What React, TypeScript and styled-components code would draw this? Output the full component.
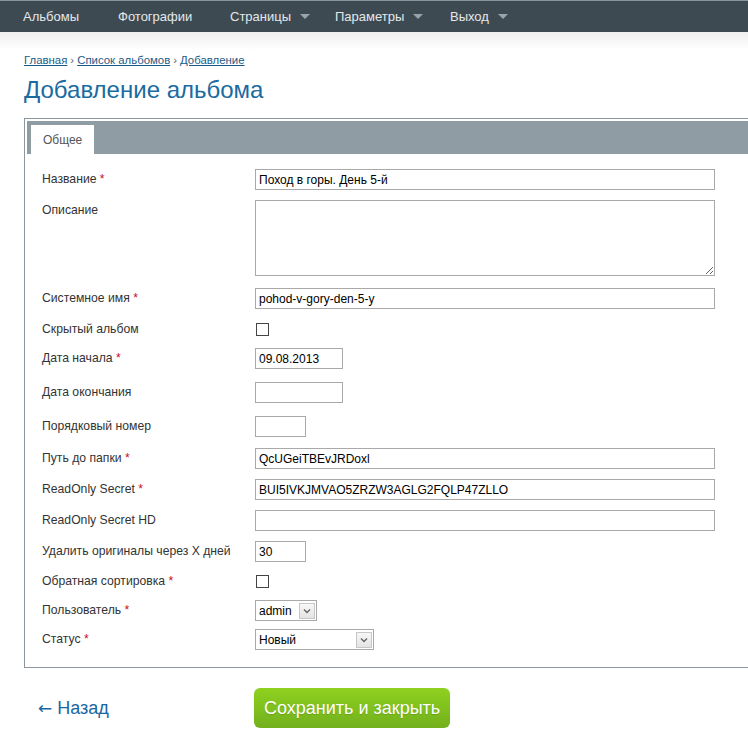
import React from "react";
import styled, { createGlobalStyle } from "styled-components";

const Global = createGlobalStyle`
  html, body { margin: 0; padding: 0; background: #fff; overflow: hidden; }
  body { font-family: "Liberation Sans", Arial, sans-serif; }
  * { box-sizing: border-box; }
`;

const Nav = styled.nav`
  height: 32px;
  background: #3d4a52;
  border-top: 1px solid #8a9399;
  display: flex;
  align-items: center;
  padding-left: 23px;
`;

const NavItem = styled.a<{ $w: number }>`
  width: ${(p) => p.$w}px;
  color: #e4e8ea;
  font-size: 13px;
  text-decoration: none;
  display: flex;
  align-items: center;
  gap: 9px;
`;

const Caret = styled.span`
  width: 0;
  height: 0;
  border-left: 5px solid transparent;
  border-right: 5px solid transparent;
  border-top: 5px solid #9aa3a8;
`;

const Shade = styled.div`
  background: linear-gradient(#efefef, #fff);
  height: 18px;
`;

const Content = styled.main`
  padding-left: 24px;
`;

const Crumbs = styled.div`
  font-size: 11.4px;
  color: #666;
  display: flex;
  gap: 3px;
  align-items: baseline;
  height: 17px;
  padding-top: 4px;
`;

const Crumb = styled.a`
  color: #1a5c88;
  text-decoration: underline;
`;

const Title = styled.h1`
  margin: 10px 0 0;
  font-weight: normal;
  font-size: 24px;
  color: #1a6ba0;
  height: 41px;
  line-height: 26px;
`;

const Panel = styled.section`
  width: 760px;
  border: 1px solid #8d989e;
  padding: 2px 2px 0;
`;

const TabBar = styled.div`
  height: 33px;
  background: #8f9ca3;
  display: flex;
  align-items: flex-end;
  padding-left: 4px;
`;

const Tab = styled.div`
  height: 29px;
  background: #fff;
  padding: 0 12px;
  display: flex;
  align-items: center;
  font-size: 12px;
  color: #555;
`;

const Form = styled.div`
  padding: 15px 0 17px 15px;
  display: flex;
  flex-direction: column;
`;

const Row = styled.div<{ $mt: number }>`
  display: grid;
  grid-template-columns: 213px 1fr;
  align-items: start;
  margin-top: ${(p) => p.$mt}px;
`;

const Label = styled.label`
  font-size: 12.2px;
  color: #333;
  line-height: 21px;
`;

const Req = styled.span`
  color: #c8102e;
`;

const Input = styled.input<{ $w: number }>`
  width: ${(p) => p.$w}px;
  height: 21px;
  border: 1px solid #a9a9a9;
  padding: 0 3px;
  font-family: "Liberation Sans", Arial, sans-serif;
  font-size: 12px;
  color: #000;
  outline: none;
  display: block;
`;

const TextArea = styled.textarea`
  width: 460px;
  height: 76px;
  border: 1px solid #a9a9a9;
  display: block;
  outline: none;
`;

const CheckCell = styled.div`
  height: 21px;
  display: flex;
  align-items: center;
  padding-left: 1px;
`;

const Check = styled.input`
  appearance: none;
  margin: 0;
  width: 13px;
  height: 13px;
  border: 1px solid #444;
  background: #fff;
`;

const SelectBox = styled.div<{ $w: number }>`
  width: ${(p) => p.$w}px;
  height: 21px;
  border: 1px solid #a9a9a9;
  display: flex;
  align-items: center;
  background: #fff;
`;

const Select = styled.select`
  appearance: none;
  border: none;
  outline: none;
  background: transparent;
  flex: 1;
  min-width: 0;
  height: 19px;
  padding: 0 0 0 3px;
  font-family: "Liberation Sans", Arial, sans-serif;
  font-size: 12px;
  color: #000;
`;

const Arrow = styled.span`
  width: 16px;
  height: 16px;
  margin-right: 1px;
  border: 1px solid #c7c7c7;
  background: linear-gradient(#f7f7f7, #e4e4e4);
  display: flex;
  align-items: center;
  justify-content: center;
`;

const Actions = styled.div`
  display: flex;
  align-items: center;
  margin-top: 20px;
  padding-left: 14px;
`;

const Back = styled.a`
  width: 216px;
  font-size: 18px;
  color: #1a66a0;
  text-decoration: none;
`;

const BackArrow = styled.span`
  font-family: "DejaVu Sans", sans-serif;
  font-size: 17px;
`;

const SaveButton = styled.button`
  height: 40px;
  padding: 0 10px;
  border: none;
  border-radius: 6px;
  background: linear-gradient(#8fd11f, #72b01d);
  color: #fff;
  font-family: "Liberation Sans", Arial, sans-serif;
  font-size: 18px;
  text-shadow: 0 1px 1px rgba(0, 0, 0, 0.15);
  cursor: pointer;
`;

const Chevron = () => (
  <svg width="8" height="6" viewBox="0 0 8 6">
    <path d="M1 1.5 L4 4.5 L7 1.5" fill="none" stroke="#666" strokeWidth="1.4" />
  </svg>
);

type Field =
  | { label: string; req?: boolean; kind: "text"; value?: string; w: number; mt: number }
  | { label: string; req?: boolean; kind: "area"; mt: number }
  | { label: string; req?: boolean; kind: "check"; mt: number }
  | { label: string; req?: boolean; kind: "select"; value: string; w: number; mt: number };

const fields: Field[] = [
  { label: "Название", req: true, kind: "text", value: "Поход в горы. День 5-й", w: 460, mt: 0 },
  { label: "Описание", kind: "area", mt: 10 },
  { label: "Системное имя", req: true, kind: "text", value: "pohod-v-gory-den-5-y", w: 460, mt: 12 },
  { label: "Скрытый альбом", kind: "check", mt: 10 },
  { label: "Дата начала", req: true, kind: "text", value: "09.08.2013", w: 88, mt: 8 },
  { label: "Дата окончания", kind: "text", value: "", w: 88, mt: 13 },
  { label: "Порядковый номер", kind: "text", value: "", w: 51, mt: 13 },
  { label: "Путь до папки", req: true, kind: "text", value: "QcUGeiTBEvJRDoxl", w: 460, mt: 11 },
  { label: "ReadOnly Secret", req: true, kind: "text", value: "BUI5IVKJMVAO5ZRZW3AGLG2FQLP47ZLLO", w: 460, mt: 10 },
  { label: "ReadOnly Secret HD", kind: "text", value: "", w: 460, mt: 10 },
  { label: "Удалить оригиналы через X дней", kind: "text", value: "30", w: 51, mt: 10 },
  { label: "Обратная сортировка", req: true, kind: "check", mt: 9 },
  { label: "Пользователь", req: true, kind: "select", value: "admin", w: 62, mt: 8 },
  { label: "Статус", req: true, kind: "select", value: "Новый", w: 119, mt: 8 },
];

function Control({ f }: { f: Field }) {
  switch (f.kind) {
    case "text":
      return <Input $w={f.w} defaultValue={f.value} />;
    case "area":
      return <TextArea />;
    case "check":
      return (
        <CheckCell>
          <Check type="checkbox" />
        </CheckCell>
      );
    case "select":
      return (
        <SelectBox $w={f.w}>
          <Select defaultValue={f.value}>
            <option>{f.value}</option>
          </Select>
          <Arrow>
            <Chevron />
          </Arrow>
        </SelectBox>
      );
  }
}

export default function App() {
  return (
    <>
      <Global />
      <Nav>
        <NavItem $w={95}>Альбомы</NavItem>
        <NavItem $w={112}>Фотографии</NavItem>
        <NavItem $w={105}>
          Страницы <Caret />
        </NavItem>
        <NavItem $w={115}>
          Параметры <Caret />
        </NavItem>
        <NavItem $w={100}>
          Выход <Caret />
        </NavItem>
      </Nav>
      <Shade />
      <Content>
        <Crumbs>
          <Crumb href="#">Главная </Crumb>›<Crumb href="#">Список альбомов</Crumb>›
          <Crumb href="#">Добавление</Crumb>
        </Crumbs>
        <Title>Добавление альбома</Title>
        <Panel>
          <TabBar>
            <Tab>Общее</Tab>
          </TabBar>
          <Form>
            {fields.map((f) => (
              <Row key={f.label} $mt={f.mt}>
                <Label>
                  {f.label}
                  {f.req && <Req> *</Req>}
                </Label>
                <Control f={f} />
              </Row>
            ))}
          </Form>
        </Panel>
        <Actions>
          <Back href="#">
            <BackArrow>←</BackArrow> Назад
          </Back>
          <SaveButton>Сохранить и закрыть</SaveButton>
        </Actions>
      </Content>
    </>
  );
}
